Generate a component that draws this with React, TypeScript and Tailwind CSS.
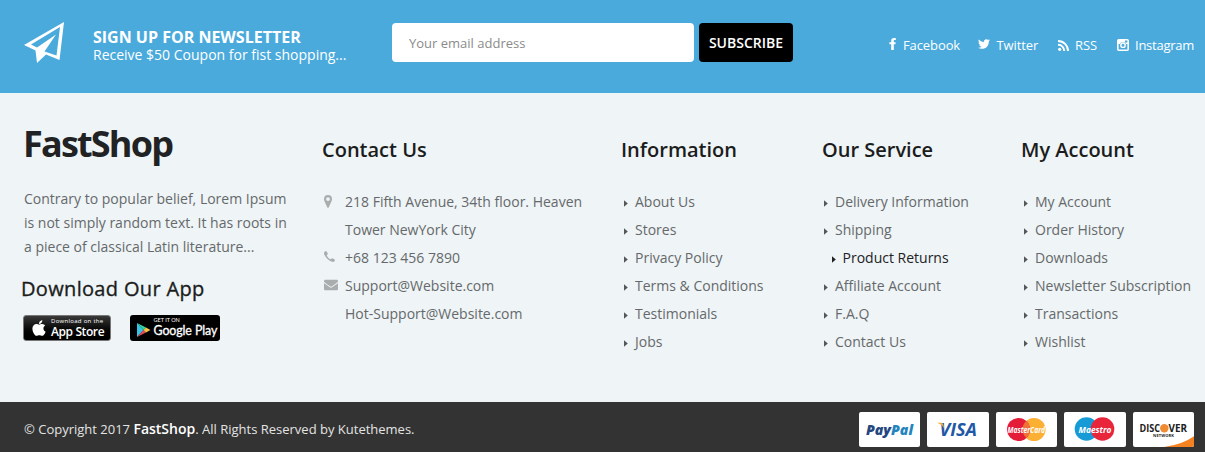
import React from "react";
import { FaApple, FaEnvelope, FaTwitter } from "react-icons/fa";

function PlaneIcon() {
  return (
    <svg width="41" height="42" viewBox="0 0 41 42" className="block shrink-0">
      <path
        fillRule="evenodd"
        fill="#fff"
        d="M40 0 L35.5 38 L22 32.5 L13 41 L11.5 28.5 L0 23 Z M36 5 L7 22.5 L13 25.5 L32 12.5 L20.5 29.5 L32.5 33.5 Z"
      />
    </svg>
  );
}

function FacebookIcon() {
  return (
    <svg width="7" height="12" viewBox="0 0 7 12" className="-mt-[2px] block">
      <path fill="#fff" d="M6.8 .1 V2.1 H5.5 Q4.8 2.1 4.8 2.9 V4.2 H6.7 L6.4 6.3 H4.8 V12 H2.2 V6.3 H.4 V4.2 H2.2 V2.7 Q2.2 0 5 0 Z" />
    </svg>
  );
}

function RssIcon() {
  return (
    <svg width="11" height="11" viewBox="0 0 11 11" className="block">
      <circle cx="1.7" cy="9.3" r="1.6" fill="#fff" />
      <path d="M0 4.8 A6 6 0 0 1 6.2 11 M0 1 A10 10 0 0 1 10 11" fill="none" stroke="#fff" strokeWidth="1.9" />
    </svg>
  );
}

function InstagramIcon() {
  return (
    <svg width="12" height="12" viewBox="0 0 12 12" className="-mt-px block">
      <rect x=".8" y=".8" width="10.4" height="10.4" rx="1" fill="none" stroke="#fff" strokeWidth="1.6" />
      <path d="M1 1 H8 V3.6 H11 V5 H1 Z" fill="#fff" />
      <circle cx="6" cy="6.2" r="3.2" fill="#4aaadc" />
      <circle cx="6" cy="6.2" r="2.2" fill="none" stroke="#fff" strokeWidth="1.4" />
    </svg>
  );
}

function PinIcon() {
  return (
    <svg width="8" height="13" viewBox="0 0 8 13" className="mt-[7px] block">
      <path
        fillRule="evenodd"
        fill="#a9adad"
        d="M4 0 A4 4 0 0 1 8 4 Q8 5.2 7.5 6.2 L4.8 12.3 Q4 13.5 3.2 12.3 L.5 6.2 Q0 5.2 0 4 A4 4 0 0 1 4 0 Z M4 2.2 A1.9 1.9 0 1 0 4 6 A1.9 1.9 0 1 0 4 2.2 Z"
      />
    </svg>
  );
}

function PhoneIcon() {
  return (
    <svg width="11" height="11" viewBox="0 0 11 11" className="mt-[7px] block">
      <path
        fill="#a9adad"
        d="M0 2 Q0 .9 .9 .4 Q2 -.2 2.6 .4 L3.8 2.6 Q3.9 3.1 3.2 3.7 Q2.6 4.2 2.8 4.7 Q4 7 6.3 8.2 Q6.8 8.4 7.3 7.8 Q7.9 7.1 8.4 7.2 L10.6 8.4 Q11.2 9 10.6 10.1 Q10.1 11 9 11 Q6.5 11 3.2 7.8 Q0 4.5 0 2 Z"
      />
    </svg>
  );
}

function Social({ icon, label, className }: { icon: React.ReactNode; label: string; className: string }) {
  return (
    <a className={"flex h-4 items-center " + className}>
      {icon}
      <span>{label}</span>
    </a>
  );
}

function Column({ title, items, active, className }: { title: string; items: string[]; active?: string; className: string }) {
  return (
    <section className={"shrink-0 pt-[43px] " + className}>
      <h3 className="text-[20px] font-semibold leading-7 text-[#1b1c1c]">{title}</h3>
      <ul className="mt-[23px] pl-[3px]">
        {items.map((item) => (
          <li
            key={item}
            className={
              item === active
                ? "flex h-7 items-center gap-[7px] pl-[7.5px] text-[#202224]"
                : "flex h-7 items-center gap-[7px]"
            }
          >
            <svg width="4" height="7" viewBox="0 0 4 7" className="mt-[4px] block">
              <path d="M0 .3 L3.8 3.5 L0 6.7 Z" fill={item === active ? "#202224" : "#54585a"} />
            </svg>
            <span>{item}</span>
          </li>
        ))}
      </ul>
    </section>
  );
}

function AppStoreBadge() {
  return (
    <div className="flex h-[26px] w-[88px] items-center rounded-[3px] border border-[#777] bg-linear-to-b from-[#3a3a3a] via-[#0c0c0c] to-black pl-[6px] text-white">
      <FaApple size={18} className="-mt-px shrink-0" />
      <div className="w-[60px] pl-[3px]">
        <div className="h-[8px] text-[6px] leading-[8px] tracking-[0.3px]">Download on the</div>
        <div className="h-[14px] text-[12px] font-semibold leading-[13px] tracking-[-0.4px]">App Store</div>
      </div>
    </div>
  );
}

function GooglePlayBadge() {
  return (
    <div className="flex h-[26px] w-[90px] rounded-[3px] bg-black pl-[7px] text-white">
      <svg width="14" height="26" viewBox="0 0 14 26" className="block shrink-0">
        <path d="M0 8 L6.5 15 L0 22 Z" fill="#35c3e8" />
        <path d="M0 8 L9 12.6 L6.5 15 Z" fill="#38d39f" />
        <path d="M0 22 L9 17.4 L6.5 15 Z" fill="#e94b57" />
        <path d="M9 12.6 L13.5 15 L9 17.4 L6.5 15 Z" fill="#f6c344" />
      </svg>
      <div className="pl-[2.5px] pt-[2px] font-['Lato',sans-serif]">
        <div className="h-[7px] text-[5.5px] leading-[7px]">GET IT ON</div>
        <div className="h-[14px] text-[12.4px] leading-[13px] tracking-[-0.1px] [-webkit-text-stroke:0.3px_white]">Google Play</div>
      </div>
    </div>
  );
}

function Card({ children }: { children: React.ReactNode }) {
  return (
    <svg width="61.5" height="35" viewBox="0 0 61.5 35" className="block rounded-[2px] bg-white" fontFamily="Open Sans, sans-serif">
      {children}
    </svg>
  );
}

function PaymentCards() {
  return (
    <div className="flex gap-[6.9px] pt-[10px]">
      <Card>
        <text x="7" y="22.5" fontSize="14.5" fontWeight="800" fontStyle="italic" textLength="47" lengthAdjust="spacingAndGlyphs">
          <tspan fill="#24477f">Pay</tspan><tspan fill="#2484bd">Pal</tspan>
        </text>
      </Card>
      <Card>
        <text x="12.5" y="24" fontSize="18.5" fontWeight="700" fontStyle="italic" fill="#2058a5" textLength="37.5" lengthAdjust="spacingAndGlyphs">VISA</text>
        <path d="M10 10.8 H14.5 Q16 11 16.4 13 L17.2 16.5 Q15 12.5 10 10.8 Z" fill="#efa83a" />
      </Card>
      <Card>
        <circle cx="38" cy="17.5" r="11.5" fill="#fbb034" />
        <circle cx="22.5" cy="17.5" r="11.5" fill="#e51c37" />
        <path d="M30.3 9 A11.5 11.5 0 0 1 30.3 26 A11.5 11.5 0 0 1 30.3 9 Z" fill="#f0703a" />
        <text x="11.5" y="20.5" fontSize="8.5" fontWeight="700" fontStyle="italic" fill="#fff" textLength="37.5" lengthAdjust="spacingAndGlyphs">MasterCard</text>
      </Card>
      <Card>
        <circle cx="22.5" cy="17" r="11.8" fill="#169bd7" />
        <circle cx="38.5" cy="17" r="11.8" fill="#e9253b" />
        <text x="14.5" y="20.5" fontSize="9.5" fontWeight="700" fontStyle="italic" fill="#fff" textLength="33" lengthAdjust="spacingAndGlyphs">Maestro</text>
      </Card>
      <Card>
        <path d="M31 35 Q49 33 61.5 24 V35 Z" fill="#f58220" />
        <circle cx="31.3" cy="16.2" r="4.2" fill="#f08a33" />
        <g fill="#202020" fontWeight="700">
          <text x="6.5" y="20" fontSize="10.8" textLength="20.5" lengthAdjust="spacingAndGlyphs">DISC</text>
          <text x="35.5" y="20" fontSize="10.8" textLength="18.5" lengthAdjust="spacingAndGlyphs">VER</text>
          <text x="20" y="25" fontSize="4" textLength="21">NETWORK</text>
        </g>
      </Card>
    </div>
  );
}

export default function App() {
  return (
    <footer className="flex h-[452px] w-[1205px] flex-col overflow-hidden whitespace-nowrap bg-[#eff4f6] font-['Open_Sans',sans-serif] text-[14px] text-[#65696b]">
      <div className="flex h-[93px] shrink-0 bg-[#4aaadc] pl-6 text-white">
        <div className="w-[69px] pt-[21.5px]">
          <PlaneIcon />
        </div>
        <div className="w-[299px] pt-7">
          <h2 className="text-[16px] font-bold leading-[18px]">SIGN UP FOR NEWSLETTER</h2>
          <p className="text-[14px] leading-[18px]">Receive $50 Coupon for fist shopping...</p>
        </div>
        <div className="flex gap-[5px] pt-[23px]">
          <div className="flex h-[39px] w-[302px] items-center rounded-[4px] bg-white pl-[17px] text-[13px] text-[#8b8b8b]">
            <span className="pt-[2px]">Your email address</span>
          </div>
          <button className="flex h-[39px] w-[94px] items-center justify-center rounded-[4px] bg-black text-[14px] font-semibold">
            SUBSCRIBE
          </button>
        </div>
        <nav className="ml-[96px] flex h-4 pt-[37px] text-[13px] leading-4 tracking-[-0.1px]">
          <Social className="w-[89px] gap-[7px]" icon={<FacebookIcon />} label="Facebook" />
          <Social className="w-[80px] gap-[6.5px]" icon={<FaTwitter size={12} className="-mt-[2px]" />} label="Twitter" />
          <Social className="w-[58.5px] gap-[6px]" icon={<RssIcon />} label="RSS" />
          <Social className="gap-[6.5px] tracking-[-0.25px]" icon={<InstagramIcon />} label="Instagram" />
        </nav>
      </div>

      <div className="flex h-[309px] shrink-0">
        <section className="w-[322px] shrink-0 pl-[23px] pt-[26px]">
          <div className="text-[36px] font-bold leading-[50px] tracking-[-1.8px] text-[#202224]">FastShop</div>
          <p className="ml-px mt-[18px] leading-6">
            Contrary to popular belief, Lorem Ipsum
            <br />
            is not simply random text. It has roots in
            <br />a piece of classical Latin literature...
          </p>
          <h3 className="-ml-[2px] mt-4 text-[20px] leading-7 tracking-[0.33px] text-[#1b1c1c] [-webkit-text-stroke:0.35px_#1b1c1c]">
            Download Our App
          </h3>
          <div className="mt-3 flex gap-[19px]">
            <AppStoreBadge />
            <GooglePlayBadge />
          </div>
        </section>

        <section className="w-[299px] shrink-0 pt-[43px]">
          <h3 className="text-[20px] font-semibold leading-7 text-[#1b1c1c]">Contact Us</h3>
          <div className="mt-6 grid grid-cols-[21px_auto] pl-[2px] leading-7">
            <PinIcon />
            <p>
              218 Fifth Avenue, 34th floor. Heaven
              <br />
              Tower NewYork City
            </p>
            <PhoneIcon />
            <p>+68 123 456 7890</p>
            <FaEnvelope size={14} color="#a9adae" className="mt-[6px]" />
            <p>
              Support@Website.com
              <br />
              Hot-Support@Website.com
            </p>
          </div>
        </section>

        <Column
          className="w-[201px]"
          title="Information"
          items={["About Us", "Stores", "Privacy Policy", "Terms & Conditions", "Testimonials", "Jobs"]}
        />
        <Column
          className="w-[199px] [&>ul]:-ml-px"
          title="Our Service"
          active="Product Returns"
          items={["Delivery Information", "Shipping", "Product Returns", "Affiliate Account", "F.A.Q", "Contact Us"]}
        />
        <Column
          className="w-[184px]"
          title="My Account"
          items={["My Account", "Order History", "Downloads", "Newsletter Subscription", "Transactions", "Wishlist"]}
        />
      </div>

      <div className="flex h-[50px] shrink-0 justify-between bg-[#333] pl-6 pr-[11px] text-[13px] text-[#e3e3e3]">
        <p className="pt-[17px] leading-5">
          © Copyright 2017 <b className="text-[14px] font-semibold text-white">FastShop</b>. All Rights Reserved by Kutethemes.
        </p>
        <PaymentCards />
      </div>
    </footer>
  );
}
